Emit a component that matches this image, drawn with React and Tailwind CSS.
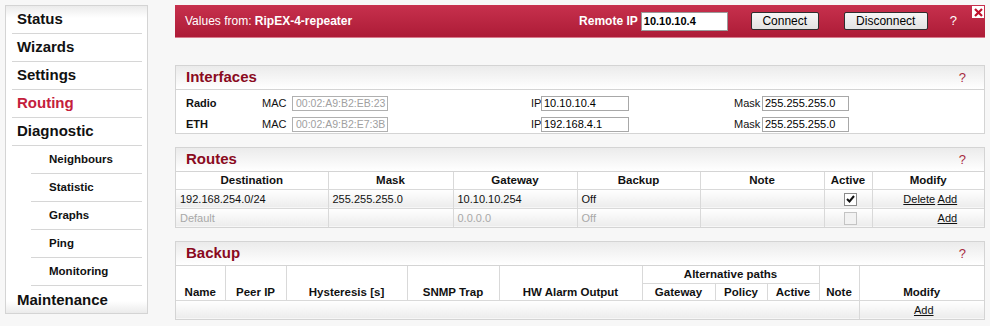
import React from "react";

const menu = [
  { label: "Status" },
  { label: "Wizards" },
  { label: "Settings" },
  { label: "Routing", active: true },
  { label: "Diagnostic" },
  { label: "Neighbours", sub: true },
  { label: "Statistic", sub: true },
  { label: "Graphs", sub: true },
  { label: "Ping", sub: true },
  { label: "Monitoring", sub: true },
  { label: "Maintenance", last: true },
];

function Sidebar() {
  return (
    <div className="w-[143px] h-[309px] border border-[#d4d4d4] pl-[6px] pr-[5px] bg-[linear-gradient(to_bottom,#ebebeb,#ffffff_12px,#ffffff_calc(100%-12px),#ebebeb)]">
      {menu.map((item) => (
        <div
          key={item.label}
          className={
            "h-[28px] flex items-center " +
            (item.last ? "" : "border-b border-[#d6d6d6] ") +
            (item.sub ? "ml-[19px] pl-[18px] text-[11.5px] " : "pl-[5px] text-[15px] ") +
            (item.active ? "text-[#c4203c]" : "text-[#111]")
          }
        >
          <span className="font-bold">{item.label}</span>
        </div>
      ))}
    </div>
  );
}

function TopBar() {
  return (
    <div className="relative h-[33px] border-b border-[#d97a8c] bg-gradient-to-b from-[#c7304d] to-[#ad1b37] flex items-center pl-[10px] pr-[28px] text-white">
      <span className="text-[12px]">
        Values from: <b>RipEX-4-repeater</b>
      </span>
      <div className="ml-auto flex items-center">
        <span className="text-[12px] font-bold">Remote IP</span>
        <input
          readOnly
          value="10.10.10.4"
          className="ml-[3px] w-[87px] h-[19px] bg-white border border-[#9a9a9a] pl-[2px] text-[11px] font-bold text-black outline-none"
        />
        <button className="ml-[23px] w-[68px] h-[18px] border border-[#2e2e2e] rounded-[2px] bg-gradient-to-b from-[#f6f6f6] to-[#e2e2e2] text-[12px] text-black leading-none">
          Connect
        </button>
        <button className="ml-[25px] w-[84px] h-[18px] border border-[#2e2e2e] rounded-[2px] bg-gradient-to-b from-[#f6f6f6] to-[#e2e2e2] text-[12px] text-black leading-none">
          Disconnect
        </button>
        <span className="ml-[22px] text-[13px]">?</span>
      </div>
      <div className="absolute right-[1px] top-[1px] w-[12px] h-[12px] bg-white flex items-center justify-center">
        <svg width="9" height="9" viewBox="0 0 9 9">
          <path d="M1 1L8 8M8 1L1 8" stroke="#c0102c" strokeWidth="2.2" />
        </svg>
      </div>
    </div>
  );
}

function Panel({ title, children, className = "" }) {
  return (
    <div className={"border border-[#d4d4d4] bg-white " + className}>
      <div className="h-[24px] border-b border-[#d4d4d4] bg-gradient-to-b from-[#ebebeb] to-white flex items-center justify-between pl-[10px] pr-[18px]">
        <span className="text-[15px] font-bold text-[#8a0a1e]">{title}</span>
        <span className="text-[13px] text-[#a82a3e]">?</span>
      </div>
      {children}
    </div>
  );
}

function IfRow({ name, mac, ip, mask }) {
  return (
    <div className="flex items-center h-[15px] text-[11px] text-[#111]">
      <span className="w-[76px] font-bold">{name}</span>
      <span className="w-[30px]">MAC</span>
      <input
        readOnly
        value={mac}
        className="w-[96px] h-[15px] border border-[#b0b0b0] bg-white pl-[3px] text-[10.5px] text-[#a0a0a0] outline-none"
      />
      <span className="w-[143px]" />
      <span className="w-[10px]">IP</span>
      <input
        readOnly
        value={ip}
        className="w-[88px] h-[15px] border border-[#a8a8a8] bg-white pl-[2px] text-[11px] text-black outline-none"
      />
      <span className="w-[105px]" />
      <span className="w-[28px]">Mask</span>
      <input
        readOnly
        value={mask}
        className="w-[87px] h-[15px] border border-[#a8a8a8] bg-white pl-[2px] text-[11px] text-black outline-none"
      />
    </div>
  );
}

function Check({ checked }) {
  return (
    <span
      className={
        "inline-flex w-[13px] h-[13px] items-center justify-center border align-middle " +
        (checked ? "border-[#8a8a8a] bg-white" : "border-[#c4c4c4] bg-[#f2f2f2]")
      }
    >
      {checked && (
        <svg width="9" height="8" viewBox="0 0 9 8">
          <path d="M1 4L3.5 6.5L8 1" stroke="#111" strokeWidth="2" fill="none" />
        </svg>
      )}
    </span>
  );
}

const th = "border-r border-b border-[#d9d9d9] h-[17px] p-0 font-bold text-[11.5px] leading-[14px] text-[#111] text-center";
const td = "border-r border-b border-[#d9d9d9] h-[19px] p-0 pl-[4px] text-[11px] leading-[14px] bg-gradient-to-b from-white to-[#ececec]";

function Routes() {
  const cols = [152, 125, 124, 123, 124, 48, 112];
  return (
    <table className="table-fixed border-collapse w-[808px]">
      <colgroup>
        {cols.map((w, i) => (
          <col key={i} style={{ width: w }} />
        ))}
      </colgroup>
      <thead>
        <tr>
          <th className={th}>Destination</th>
          <th className={th}>Mask</th>
          <th className={th}>Gateway</th>
          <th className={th}>Backup</th>
          <th className={th}>Note</th>
          <th className={th}>Active</th>
          <th className={th + " border-r-0"}>Modify</th>
        </tr>
      </thead>
      <tbody>
        <tr className="text-[#111]">
          <td className={td}>192.168.254.0/24</td>
          <td className={td}>255.255.255.0</td>
          <td className={td}>10.10.10.254</td>
          <td className={td}>Off</td>
          <td className={td}></td>
          <td className={td + " text-center pl-0"}>
            <Check checked />
          </td>
          <td className={td + " text-center pl-0 border-r-0"}>
            <span className="underline">Delete</span> <span className="underline">Add</span>
          </td>
        </tr>
        <tr className="text-[#a8a8a8]">
          <td className={td + " border-b-0"}>Default</td>
          <td className={td + " border-b-0"}></td>
          <td className={td + " border-b-0"}>0.0.0.0</td>
          <td className={td + " border-b-0"}>Off</td>
          <td className={td + " border-b-0"}></td>
          <td className={td + " border-b-0 text-center pl-0"}>
            <Check />
          </td>
          <td className={td + " border-b-0 border-r-0 text-center pl-0 text-[#111]"}>
            <span className="invisible">Delete</span> <span className="underline">Add</span>
          </td>
        </tr>
      </tbody>
    </table>
  );
}

function Backup() {
  const cols = [49, 61, 121, 92, 143, 73, 52, 52, 40, 125];
  const bh = th + " align-bottom pb-[1px]";
  return (
    <table className="table-fixed border-collapse w-[808px]">
      <colgroup>
        {cols.map((w, i) => (
          <col key={i} style={{ width: w }} />
        ))}
      </colgroup>
      <thead>
        <tr>
          <th rowSpan={2} className={bh}>Name</th>
          <th rowSpan={2} className={bh}>Peer IP</th>
          <th rowSpan={2} className={bh}>Hysteresis [s]</th>
          <th rowSpan={2} className={bh}>SNMP Trap</th>
          <th rowSpan={2} className={bh}>HW Alarm Output</th>
          <th colSpan={3} className={th}>Alternative paths</th>
          <th rowSpan={2} className={bh}>Note</th>
          <th rowSpan={2} className={bh + " border-r-0"}>Modify</th>
        </tr>
        <tr>
          <th className={th}>Gateway</th>
          <th className={th}>Policy</th>
          <th className={th}>Active</th>
        </tr>
      </thead>
      <tbody>
        <tr>
          <td colSpan={9} className={td + " border-b-0"}></td>
          <td className={td + " border-b-0 border-r-0 text-center pl-0 text-[#111]"}>
            <span className="underline">Add</span>
          </td>
        </tr>
      </tbody>
    </table>
  );
}

export default function App() {
  return (
    <div className="w-[990px] h-[326px] bg-[#f7f7f7] flex pt-[5px] pl-[5px] font-['Liberation_Sans',Arial,sans-serif] overflow-hidden">
      <Sidebar />
      <div className="ml-[27px] w-[810px] flex flex-col">
        <TopBar />
        <Panel title="Interfaces" className="mt-[27px]">
          <div className="pt-[6px] pb-[1px] pl-[10px] flex flex-col gap-[6px]">
            <IfRow name="Radio" mac="00:02:A9:B2:EB:23" ip="10.10.10.4" mask="255.255.255.0" />
            <IfRow name="ETH" mac="00:02:A9:B2:E7:3B" ip="192.168.4.1" mask="255.255.255.0" />
          </div>
        </Panel>
        <Panel title="Routes" className="mt-[13px]">
          <Routes />
        </Panel>
        <Panel title="Backup" className="mt-[13px]">
          <Backup />
        </Panel>
      </div>
    </div>
  );
}
